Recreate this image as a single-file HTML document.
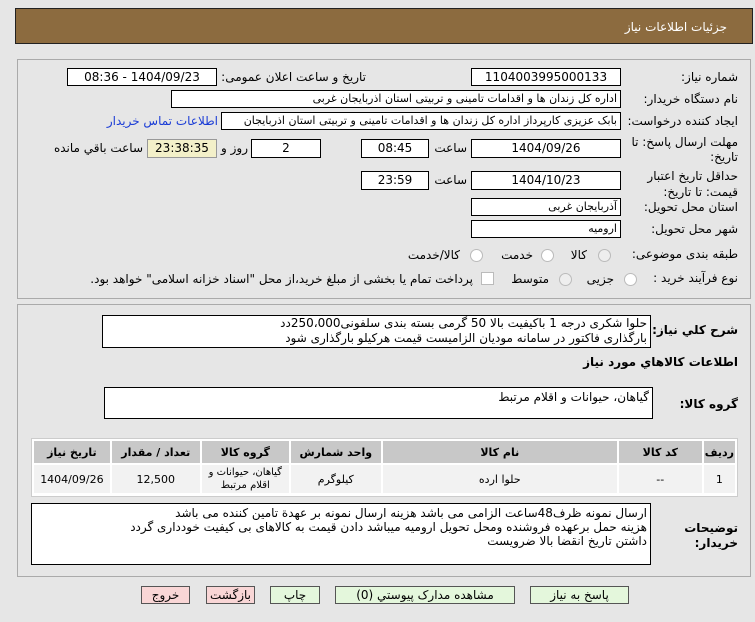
<!DOCTYPE html>
<html><head><meta charset="utf-8"><style>
body{margin:0;width:755px;height:622px;background:#e6e6e6;font-family:"DejaVu Sans","Liberation Sans",sans-serif;font-size:11px;color:#000;position:relative;overflow:hidden}
.a{position:absolute}
.in{position:absolute;background:#fff;border:1px solid #000;box-sizing:border-box;direction:rtl;padding:0 3px;line-height:16px;white-space:nowrap;overflow:hidden}
.c{text-align:center}
.l{position:absolute;direction:rtl;white-space:nowrap;text-align:right}
.b{font-weight:bold}
.btn{position:absolute;top:586px;height:18px;border:1px solid #555;box-sizing:border-box;text-align:center;line-height:16px;font-size:12px}
.g{background:#e4f7dc}.p{background:#f9d6d6}
table{border-collapse:separate;border-spacing:2px}
td{text-align:center;direction:rtl}
</style></head><body>
<div class="a" style="left:15px;top:8px;width:738px;height:36px;background:#8c6b3f;border:1px solid #222;box-sizing:border-box"></div>
<div class="l" style="right:28px;top:20px;color:#fff;font-size:12px">جزئیات اطلاعات نیاز</div>
<div class="a" style="left:17px;top:59px;width:734px;height:240px;border:1px solid #aaa;box-sizing:border-box"></div>
<div class="a" style="left:17px;top:304px;width:734px;height:273px;border:1px solid #aaa;box-sizing:border-box"></div>

<div class="l" style="right:17px;top:70px;font-size:12px">شماره نیاز:</div>
<div class="in c" style="left:471px;top:68px;width:150px;height:18px;font-size:12px">1104003995000133</div>
<div class="l" style="right:389px;top:70px;font-size:12px">تاریخ و ساعت اعلان عمومی:</div>
<div class="in c" style="left:67px;top:68px;width:150px;height:18px;font-size:12px">1404/09/23 - 08:36</div>

<div class="l" style="right:17px;top:92px;font-size:12px">نام دستگاه خریدار:</div>
<div class="in" style="left:171px;top:90px;width:450px;height:18px">اداره کل زندان ها و اقدامات تامینی و تربیتی استان اذربایجان غربی</div>

<div class="l" style="right:17px;top:114px;font-size:12px">ایجاد کننده درخواست:</div>
<div class="in" style="left:221px;top:112px;width:400px;height:18px">بابک عزیزی کارپرداز اداره کل زندان ها و اقدامات تامینی و تربیتی استان اذربایجان</div>
<div class="l" style="right:537px;top:114px;color:#1a3cd6;font-size:12px">اطلاعات تماس خریدار</div>

<div class="l" style="right:17px;top:135px;font-size:12px;line-height:15px">مهلت ارسال پاسخ: تا<br>تاریخ:</div>
<div class="in c" style="left:471px;top:139px;width:150px;height:19px;font-size:12px">1404/09/26</div>
<div class="l" style="right:288px;top:141px;font-size:12px">ساعت</div>
<div class="in c" style="left:361px;top:139px;width:68px;height:19px;font-size:12px">08:45</div>
<div class="in c" style="left:251px;top:139px;width:70px;height:19px;font-size:12px">2</div>
<div class="l" style="right:507px;top:141px;font-size:12px">روز و</div>
<div class="in c" style="left:147px;top:139px;width:70px;height:19px;font-size:12px;background:#f3f0c9;border-color:#999">23:38:35</div>
<div class="l" style="right:612px;top:141px;font-size:12px">ساعت باقي مانده</div>

<div class="l" style="right:17px;top:168px;font-size:12px;line-height:16px">حداقل تاریخ اعتبار<br>قیمت: تا تاریخ:</div>
<div class="in c" style="left:471px;top:171px;width:150px;height:19px;font-size:12px">1404/10/23</div>
<div class="l" style="right:288px;top:173px;font-size:12px">ساعت</div>
<div class="in c" style="left:361px;top:171px;width:68px;height:19px;font-size:12px">23:59</div>

<div class="l" style="right:17px;top:200px;font-size:12px">استان محل تحویل:</div>
<div class="in" style="left:471px;top:198px;width:150px;height:18px">آذربایجان غربی</div>
<div class="l" style="right:17px;top:222px;font-size:12px">شهر محل تحویل:</div>
<div class="in" style="left:471px;top:220px;width:150px;height:18px">ارومیه</div>

<div class="l" style="right:17px;top:247px;font-size:12px">طبقه بندی موضوعی:</div>
<div class="a" style="left:598px;top:249px;width:11px;height:11px;border:1px solid #bbb;border-radius:50%;background:#eee"></div>
<div class="l" style="right:168px;top:248px;font-size:12px">کالا</div>
<div class="a" style="left:541px;top:249px;width:11px;height:11px;border:1px solid #bbb;border-radius:50%;background:#fff"></div>
<div class="l" style="right:222px;top:248px;font-size:12px">خدمت</div>
<div class="a" style="left:470px;top:249px;width:11px;height:11px;border:1px solid #bbb;border-radius:50%;background:#fff"></div>
<div class="l" style="right:295px;top:248px;font-size:12px">کالا/خدمت</div>

<div class="l" style="right:17px;top:271px;font-size:12px">نوع فرآیند خرید :</div>
<div class="a" style="left:624px;top:273px;width:11px;height:11px;border:1px solid #bbb;border-radius:50%;background:#fff"></div>
<div class="l" style="right:141px;top:272px;font-size:12px">جزیی</div>
<div class="a" style="left:559px;top:273px;width:11px;height:11px;border:1px solid #bbb;border-radius:50%;background:#eee"></div>
<div class="l" style="right:206px;top:272px;font-size:12px">متوسط</div>
<div class="a" style="left:481px;top:272px;width:11px;height:11px;border:1px solid #bbb;background:#fff"></div>
<div class="l" style="right:282px;top:272px;font-size:12px">پرداخت تمام یا بخشی از مبلغ خرید،از محل "اسناد خزانه اسلامی" خواهد بود.</div>

<div class="l b" style="right:17px;top:323px;font-size:12px">شرح کلي نياز:</div>
<div class="in" style="left:102px;top:315px;width:549px;height:33px;line-height:15px;font-size:12px">حلوا شکری درجه 1 باکیفیت بالا  50 گرمی بسته بندی  سلفونی250،000دد<br>بارگذاری فاکتور در سامانه مودیان الزامیست قیمت هرکیلو بارگذاری شود</div>
<div class="l b" style="right:17px;top:355px;font-size:12px">اطلاعات کالاهاي مورد نياز</div>
<div class="l b" style="right:17px;top:397px;font-size:12px">گروه کالا:</div>
<div class="in" style="left:104px;top:387px;width:549px;height:32px;padding-top:1px;font-size:12px">گیاهان، حیوانات و اقلام مرتبط</div>

<div class="a" style="left:31px;top:438px;width:707px;height:59px;border:1px solid #ccc;box-sizing:border-box;background:#fff"></div>
<table class="a" style="left:32px;top:439px;width:705px;direction:rtl">
<tr style="height:22px;background:#c8c8c8;font-weight:bold;font-size:11px"><td style="width:27px">ردیف</td><td style="width:81px">کد کالا</td><td style="width:232px">نام کالا</td><td style="width:88px">واحد شمارش</td><td style="width:85px">گروه کالا</td><td style="width:86px">تعداد / مقدار</td><td>تاریخ نیاز</td></tr>
<tr style="height:28px;background:#f2f2f2;font-size:11px"><td>1</td><td>--</td><td>حلوا ارده</td><td>کیلوگرم</td><td style="line-height:13px;font-size:10px">گیاهان، حیوانات و اقلام مرتبط</td><td>12,500</td><td>1404/09/26</td></tr>
</table>

<div class="l b" style="right:17px;top:521px;font-size:12px;line-height:15px">توضیحات<br>خریدار:</div>
<div class="in" style="left:31px;top:503px;width:620px;height:62px;line-height:14px;font-size:12px;padding-top:2px">ارسال نمونه ظرف48ساعت الزامی می باشد هزینه ارسال نمونه بر عهدة تامین کننده می باشد<br>هزینه حمل برعهده فروشنده ومحل تحویل ارومیه میباشد دادن قیمت به کالاهای بی کیفیت خودداری گردد<br>داشتن تاریخ انقضا بالا ضرویست</div>

<div class="btn g" style="left:530px;width:99px">پاسخ به نیاز</div>
<div class="btn g" style="left:335px;width:180px">مشاهده مدارک پیوستي (0)</div>
<div class="btn g" style="left:270px;width:50px">چاپ</div>
<div class="btn p" style="left:206px;width:49px">بازگشت</div>
<div class="btn p" style="left:141px;width:49px">خروج</div>
</body></html>
